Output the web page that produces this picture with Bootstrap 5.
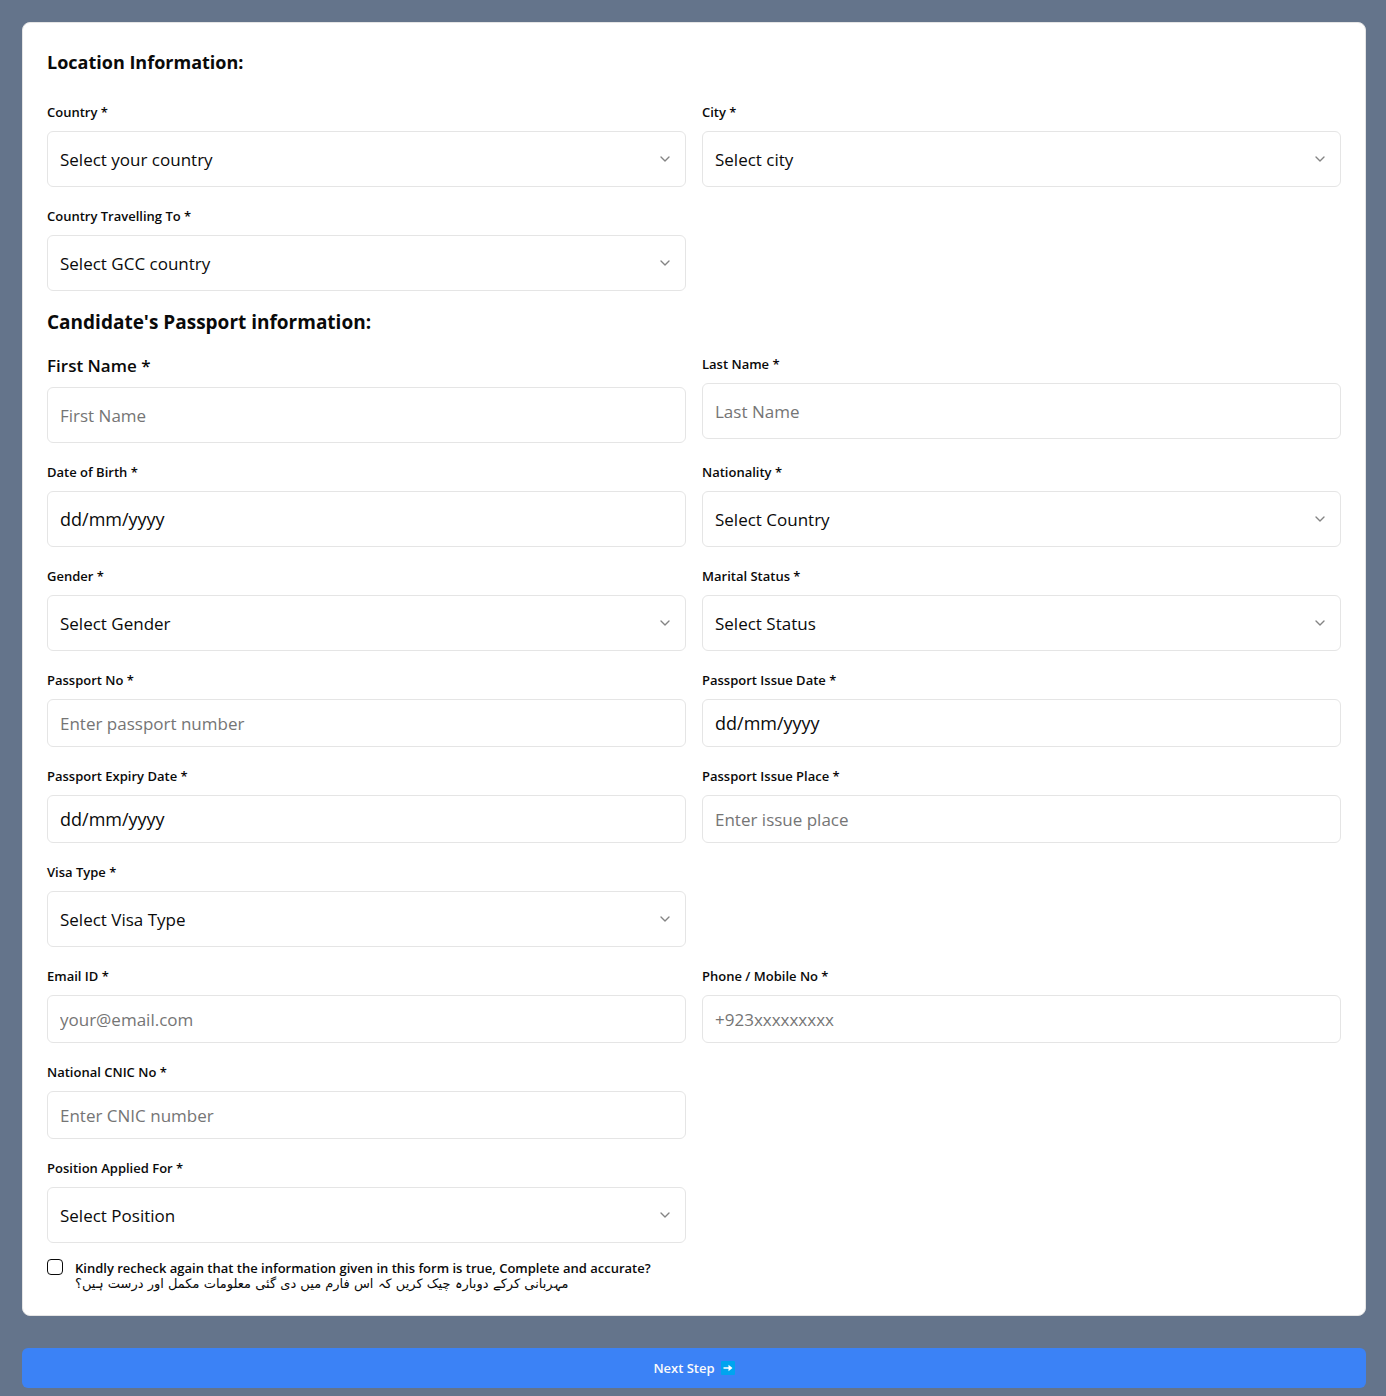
<!DOCTYPE html>
<html lang="en">
<head>
<meta charset="utf-8">
<meta name="viewport" content="width=device-width, initial-scale=1">
<title>Candidate Information</title>
<link href="https://cdn.jsdelivr.net/npm/bootstrap@5.3.0/dist/css/bootstrap.min.css" rel="stylesheet">
<style>
  body { background: #64748b; color: #0a0a0a; font-family: "Open Sans", "Noto Sans", "DejaVu Sans", sans-serif; }
  .page-wrap { padding: 22px 20px 8px 22px; }
  .form-panel { border: 1px solid #e5e5e5; border-radius: 8px; padding: 24px; margin-bottom: 32px; }
  .section-title { font-size: 18px; line-height: 26px; font-weight: 700; margin: 0; padding-top: 2px; }
  .section-title.title-lg { font-size: 19px; }
  .form-label { display: block; font-size: 13px; line-height: 26px; font-weight: 600; margin-bottom: 6px; }
  .form-label.label-lg { font-size: 17px; line-height: 30px; }
  .form-control, .form-select { height: 56px; padding: 0 12px; font-size: 17px; line-height: 28px; color: #0a0a0a; border: 1px solid #e5e5e5; border-radius: 6px; background-color: #fff; }
  .form-control.field-sm { height: 48px; }
  .form-select { padding-top: 2px; padding-right: 40px; background-position: right 12px center; background-size: 16px 16px;
    background-image: url("data:image/svg+xml,%3Csvg xmlns='http://www.w3.org/2000/svg' viewBox='0 0 24 24' fill='none' stroke='%230a0a0a' stroke-opacity='.5' stroke-width='2' stroke-linecap='round' stroke-linejoin='round'%3E%3Cpath d='m6 9 6 6 6-6'/%3E%3C/svg%3E"); }
  .form-control::placeholder { color: #757575; opacity: 1; }
  .form-control.date-field { font-size: 18px; }
  .form-control.date-field::placeholder { color: #0a0a0a; }
  .form-check-input.confirm-box { width: 16px; height: 16px; margin: 0; border: 1px solid #0a0a0a; border-radius: 4px; }
  .confirm-text { font-size: 13px; line-height: 16px; font-weight: 600; padding-top: 1px; margin-bottom: -1px; }
  .urdu-text { display: block; font-family: "DejaVu Sans", sans-serif; font-weight: 400; text-align: right; width: fit-content; }
  .btn-next { height: 40px; padding: 0 16px; gap: 6px; background: #3b82f6; color: #fafafa; border: 0; border-radius: 6px; font-size: 13px; line-height: 20px; font-weight: 600; }
  .btn-next:hover { background: #2563eb; color: #fafafa; }
</style>
</head>
<body>
<form class="page-wrap">
  <div class="form-panel bg-white">
    <h2 class="section-title mb-4">Location Information:</h2>
    <div class="row g-3">
      <div class="col-md-6"><label class="form-label" for="country">Country *</label><select class="form-select" id="country"><option>Select your country</option></select></div>
      <div class="col-md-6"><label class="form-label" for="city">City *</label><select class="form-select" id="city"><option>Select city</option></select></div>
      <div class="col-md-6"><label class="form-label" for="travel">Country Travelling To *</label><select class="form-select" id="travel"><option>Select GCC country</option></select></div>
    </div>

    <h2 class="section-title title-lg my-3">Candidate's Passport information:</h2>
    <div class="row g-3">
      <div class="col-md-6"><label class="form-label label-lg" for="first">First Name *</label><input class="form-control" id="first" type="text" placeholder="First Name"></div>
      <div class="col-md-6"><label class="form-label" for="last">Last Name *</label><input class="form-control" id="last" type="text" placeholder="Last Name"></div>
      <div class="col-md-6"><label class="form-label" for="dob">Date of Birth *</label><input class="form-control date-field" id="dob" type="text" placeholder="dd/mm/yyyy"></div>
      <div class="col-md-6"><label class="form-label" for="nationality">Nationality *</label><select class="form-select" id="nationality"><option>Select Country</option></select></div>
      <div class="col-md-6"><label class="form-label" for="gender">Gender *</label><select class="form-select" id="gender"><option>Select Gender</option></select></div>
      <div class="col-md-6"><label class="form-label" for="marital">Marital Status *</label><select class="form-select" id="marital"><option>Select Status</option></select></div>
      <div class="col-md-6"><label class="form-label" for="passport">Passport No *</label><input class="form-control field-sm" id="passport" type="text" placeholder="Enter passport number"></div>
      <div class="col-md-6"><label class="form-label" for="issued">Passport Issue Date *</label><input class="form-control field-sm date-field" id="issued" type="text" placeholder="dd/mm/yyyy"></div>
      <div class="col-md-6"><label class="form-label" for="expiry">Passport Expiry Date *</label><input class="form-control field-sm date-field" id="expiry" type="text" placeholder="dd/mm/yyyy"></div>
      <div class="col-md-6"><label class="form-label" for="place">Passport Issue Place *</label><input class="form-control field-sm" id="place" type="text" placeholder="Enter issue place"></div>
    </div>
    <div class="row g-3 pt-3">
      <div class="col-md-6"><label class="form-label" for="visa">Visa Type *</label><select class="form-select" id="visa"><option>Select Visa Type</option></select></div>
    </div>
    <div class="row g-3 pt-3">
      <div class="col-md-6"><label class="form-label" for="email">Email ID *</label><input class="form-control field-sm" id="email" type="email" placeholder="your@email.com"></div>
      <div class="col-md-6"><label class="form-label" for="phone">Phone / Mobile No *</label><input class="form-control field-sm" id="phone" type="tel" placeholder="+923xxxxxxxxx"></div>
    </div>
    <div class="row g-3 pt-3">
      <div class="col-md-6"><label class="form-label" for="cnic">National CNIC No *</label><input class="form-control field-sm" id="cnic" type="text" placeholder="Enter CNIC number"></div>
    </div>
    <div class="row g-3 pt-3">
      <div class="col-md-6"><label class="form-label" for="position">Position Applied For *</label><select class="form-select" id="position"><option>Select Position</option></select></div>
    </div>

    <div class="d-flex align-items-start mt-3">
      <input class="form-check-input confirm-box flex-shrink-0" type="checkbox" id="confirm">
      <label class="confirm-text ps-2 ms-1" for="confirm">Kindly recheck again that the information given in this form is true, Complete and accurate?<span class="urdu-text" lang="ur" dir="rtl">مہربانی کرکے دوبارہ چیک کریں کہ اس فارم میں دی گئی معلومات مکمل اور درست ہیں؟</span></label>
    </div>
  </div>

  <button class="btn btn-next w-100 d-flex align-items-center justify-content-center" type="submit">
    <span>Next Step</span>
    <svg width="14" height="14" viewBox="0 0 14 14" aria-hidden="true"><rect width="14" height="14" rx="1" fill="#00a4ef"/><path d="M2.500 6.200H7.500V3.800L11.500 7 7.500 10.200V7.800H2.500Z" fill="#fff"/></svg>
  </button>
</form>
<script src="https://cdn.jsdelivr.net/npm/bootstrap@5.3.0/dist/js/bootstrap.bundle.min.js"></script>
</body>
</html>
